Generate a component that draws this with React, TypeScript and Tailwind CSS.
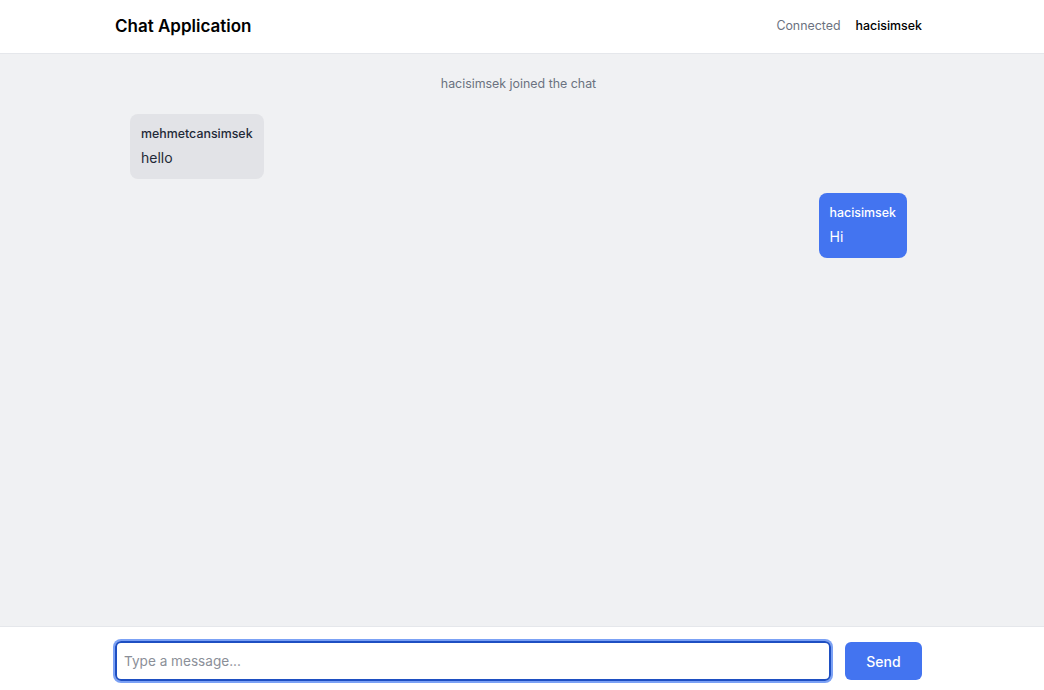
export default function App() {
  const messages = [
    { type: 'system', text: 'hacisimsek joined the chat' },
    { type: 'other', user: 'mehmetcansimsek', text: 'hello' },
    { type: 'self', user: 'hacisimsek', text: 'Hi' },
  ];

  return (
    <div className="flex h-[690px] flex-col bg-white font-['Inter',sans-serif]">
      <header className="border-b border-[#e5e7eb] bg-white">
        <div className="ml-[115px] flex h-[53px] w-[807px] items-center justify-between">
          <h1 className="text-[17px] font-semibold text-black">Chat Application</h1>
          <div className="flex items-center gap-[15px] text-[12.4px]">
            <span className="text-[#6b7280]">Connected</span>
            <span className="font-medium text-black">hacisimsek</span>
          </div>
        </div>
      </header>

      <main className="flex-1 bg-[#f0f1f3]">
        <div className="ml-[115px] flex w-[807px] flex-col gap-[14px] px-[15px] pt-[21px]">
          {messages.map((m, i) => {
            if (m.type === 'system') {
              return (
                <p key={i} className="mb-[7px] text-center text-[12.4px] leading-[18px] text-[#6b7280]">
                  {m.text}
                </p>
              );
            }
            const self = m.type === 'self';
            return (
              <div key={i} className={self ? 'flex justify-end' : 'flex justify-start'}>
                <div
                  className={
                    self
                      ? 'rounded-lg bg-[#4374f0] px-[11px] pt-[12px] pb-[11px] text-white'
                      : 'rounded-lg bg-[#e2e3e7] px-[11px] pt-[12px] pb-[11px] text-[#1f2937]'
                  }
                >
                  <div className="text-[12.4px] font-medium leading-[16px]">{m.user}</div>
                  <div className="mt-[6px] text-[14px] leading-[20px]">{m.text}</div>
                </div>
              </div>
            );
          })}
        </div>
      </main>

      <footer className="border-t border-[#e5e7eb] bg-white">
        <div className="ml-[115px] flex w-[807px] items-center gap-[14px] pt-[14px] pb-[9px]">
          <input
            autoFocus
            placeholder="Type a message..."
            className="h-[40px] flex-1 rounded-md border-2 border-[#1e4fc2] px-[7px] text-[13.6px] text-[#111827] outline-none ring-2 ring-[#7ba1f5] ring-offset-0 placeholder:text-[#8b8f98]"
          />
          <button className="h-[38px] w-[77px] rounded-md bg-[#4374f0] text-[14px] font-medium text-white">
            Send
          </button>
        </div>
      </footer>
    </div>
  );
}
